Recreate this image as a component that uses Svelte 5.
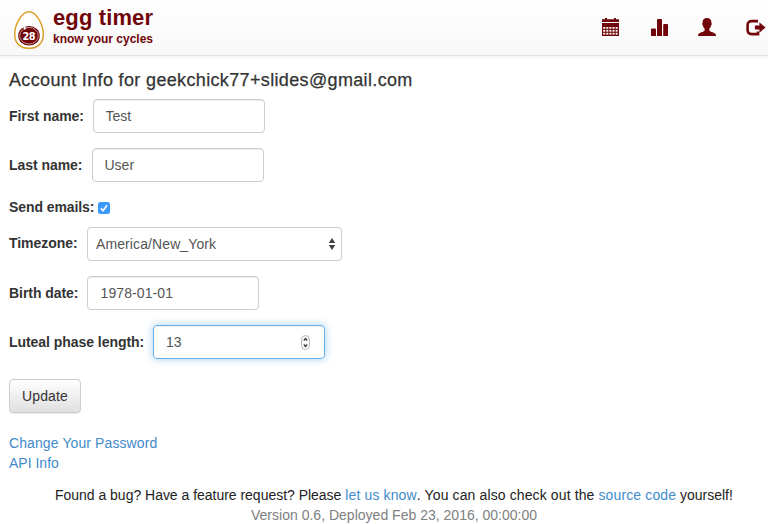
<script>
  let firstName = $state('Test');
  let lastName = $state('User');
  let birthDate = $state('1978-01-01');
  let luteal = $state('13');
  const cells = [0, 1, 2, 3, 4].flatMap((c) => [0, 1, 2].map((r) => [c, r]));
</script>

<header>
  <a class="brand" href="#home">
    <svg class="egg" width="32" height="40" viewBox="0 0 32 40">
      <path d="M16 1.7C8.7 1.7 1.7 14.5 1.7 24.5C1.7 33.7 7.8 38.3 16 38.3S30.3 33.7 30.3 24.5C30.3 14.5 23.3 1.7 16 1.7Z" fill="#fff" stroke="#dca12d" stroke-width="1.5" />
      <ellipse cx="16" cy="25.7" rx="10.8" ry="9.8" fill="#700609" />
      <ellipse cx="16" cy="25.7" rx="9.3" ry="8.3" fill="none" stroke="#d9b5b5" stroke-width=".8" />
      <path d="M10.3 16.5l3.2 1.2-2 2.5z" fill="#fff" />
      <text x="15.7" y="29.9" text-anchor="middle">28</text>
    </svg>
    <span class="words"><span class="name">egg timer</span><span class="tag">know your cycles</span></span>
  </a>
  <nav>
    <a href="#calendar" aria-label="Calendar">
      <svg width="17" height="18" viewBox="0 0 17 18">
        <path d="M0 1.2h3V0h2v1.2h7V0h2v1.2h3V4H0zM0 5h17v13H0z" />
        {#each cells as [c, r]}
          <rect x={1.2 + c * 3.1} y={9 + r * 2.9} width="2" height="1.8" fill="#fff" />
        {/each}
      </svg>
    </a>
    <a href="#charts" aria-label="Charts">
      <svg width="17" height="18" viewBox="0 0 17 18">
        <path d="M0 18v-6.5q0-1 1-1h3q1 0 1 1V18zM6 18V2q0-1 1-1h3q1 0 1 1v16zM12.2 18V7q0-1 1-1H16q1 0 1 1v11z" />
      </svg>
    </a>
    <a href="#account" aria-label="Account">
      <svg width="18" height="18" viewBox="0 0 18 18">
        <path d="M9 0C6 0 4.6 1.7 4.6 4.4c0 .7-.5.8-.4 1.7.1.8.6 1.1.8 1.8.3 1.2.8 2 1.6 2.7v2.1C5.9 13.7.9 14.6.2 16.4L0 18h18l-.2-1.6c-.7-1.8-5.7-2.7-6.4-3.7v-2.1c.8-.7 1.3-1.5 1.6-2.7.2-.7.7-1 .8-1.8.1-.9-.4-1-.4-1.7C13.4 1.7 12 0 9 0z" />
      </svg>
    </a>
    <a href="#logout" aria-label="Log out">
      <svg width="20" height="18" viewBox="0 0 20 18">
        <path d="M12 3.1H5.8q-4.2 0-4.2 4v5q0 4 4.2 4H12v-2.5" fill="none" stroke="#700609" stroke-width="2.6" />
        <path d="M13.4 4.2l6.2 5.3-6.2 5.3v-3.2H8.9V7.4h4.5z" />
      </svg>
    </a>
  </nav>
</header>

<main>
  <h4><span>Account Info for geekchick77+slides@gmail.com</span></h4>
  <form onsubmit={(e) => e.preventDefault()}>
    <div class="row first"><label for="first">First name:</label><input id="first" bind:value={firstName} /></div>
    <div class="row last"><label for="last">Last name:</label><input id="last" bind:value={lastName} /></div>
    <div class="check">
      <span class="label">Send emails:</span>
      <span class="box" role="checkbox" aria-checked="true" aria-label="Send emails" tabindex="0">
        <svg width="12" height="12" viewBox="0 0 12 12"><path d="M3 6.4l2.1 2.3L9 3.2" fill="none" stroke="#fff" stroke-width="1.6" /></svg>
      </span>
    </div>
    <div class="row zone">
      <span class="label">Timezone:</span>
      <div class="select"><span>America/New_York</span><svg width="8" height="12" viewBox="0 0 8 12"><path d="M4 0l3.3 5H.7zM4 12L.7 7h6.6z" fill="#444" /></svg></div>
    </div>
    <div class="row birth"><label for="birth">Birth date:</label><input id="birth" bind:value={birthDate} /></div>
    <div class="row luteal">
      <label for="luteal">Luteal phase length:</label>
      <div class="number">
        <input id="luteal" bind:value={luteal} />
        <svg width="9" height="15" viewBox="0 0 9 15"><rect x=".5" y=".5" width="8" height="14" rx="4" fill="#fafafa" stroke="#b8b8b8" /><path d="M2.8 5.5l1.7-2 1.7 2M2.8 9.5l1.7 2 1.7-2" fill="none" stroke="#333" stroke-width="1.2" /></svg>
      </div>
    </div>
    <button>Update</button>
  </form>
  <div class="links"><a class="password" href="#password">Change Your Password</a><a href="#api">API Info</a></div>
</main>
<footer>
  <div class="help">Found a bug? Have a feature request? Please <a href="#contact">let us know</a><span>. You can also check out the</span> <a href="#source">source code</a> yourself!</div>
  <div class="version">Version 0.6, Deployed Feb 23, 2016, 00:00:00</div>
</footer>

<style>
  :global(body) { margin: 0; background: #fff; color: #333; font: 14px/20px "Liberation Sans", Arial, sans-serif; overflow: hidden; }
  * { box-sizing: border-box; }
  svg { display: block; }
  a { color: #428bca; text-decoration: none; }
  header { height: 56px; display: flex; justify-content: space-between; background: linear-gradient(#fff, #f8f8f8); border-bottom: 1px solid #e3e3e3; box-shadow: 0 1px 4px rgba(0, 0, 0, .07); }
  .brand { display: flex; color: #700609; padding: 10px 0 0 13px; font-weight: bold; }
  .egg text { font: bold 9.8px "DejaVu Sans", sans-serif; fill: #fff; letter-spacing: -.6px; }
  .words { display: flex; flex-direction: column; margin-left: 8px; margin-top: -5px; white-space: nowrap; }
  .name { font-size: 22px; line-height: 26px; letter-spacing: .12px; }
  .tag { font-size: 12px; line-height: 16px; }
  nav { display: flex; gap: 30px; padding: 18px 2px 0 0; }
  nav a:nth-child(1) { margin-right: 2px; }
  nav svg { fill: #700609; }
  main { padding: 14px 9px 0; }
  h4 { margin: 0; font-size: 18px; line-height: 20px; font-weight: normal; height: 29px; letter-spacing: .35px; -webkit-text-stroke: .25px #333; white-space: nowrap; }
  .row { display: flex; height: 34px; margin-bottom: 15px; line-height: 34px; }
  label, .label { font-weight: bold; white-space: nowrap; flex: none; letter-spacing: -.05px; }
  .first label { width: 84px; }
  .last label { width: 83px; }
  .first input, .last input { padding-left: 11.5px; }
  .birth input { padding-left: 12.5px; letter-spacing: .1px; }
  .zone .label, .birth label { width: 78px; }
  .zone .label { line-height: 32px; }
  .luteal label { width: 144px; }
  input, .select { height: 34px; border: 1px solid #ccc; border-radius: 4px; background: #fff; color: #555; font: inherit; line-height: 20px; box-shadow: inset 0 1px 1px rgba(0, 0, 0, .075); outline: 0; }
  input { width: 172px; padding: 6px 12px; }
  .check { display: flex; height: 20px; margin: 0 0 10px; }
  .check .label { width: 85px; letter-spacing: -.08px; }
  .box { width: 12px; height: 12px; margin: 5px 0 0 4px; border-radius: 2.5px; background: #3b99fc; }
  .select { width: 255px; display: flex; align-items: center; justify-content: space-between; padding: 0 5px 0 8px; box-shadow: none; letter-spacing: .1px; }
  .number { display: flex; align-items: center; width: 172px; border: 1px solid #66afe9; border-radius: 4px; padding-right: 14px; box-shadow: inset 0 1px 1px rgba(0, 0, 0, .075), 0 0 8px rgba(102, 175, 233, .6); }
  .number input { border: 0; flex: 1; min-width: 0; height: 32px; background: transparent; box-shadow: none; }
  button { display: block; width: 72px; height: 34px; margin-top: 20px; padding: 0; font: inherit; letter-spacing: .15px; color: #333; border: 1px solid #ccc; border-radius: 4px; background: linear-gradient(#fff, #e0e0e0); box-shadow: 0 1px 1px rgba(0, 0, 0, .075); }
  .links { display: flex; flex-direction: column; align-items: flex-start; padding-top: 20px; }
  .password { letter-spacing: .1px; }
  footer { padding: 12px 0 0 55px; color: #222; white-space: nowrap; }
  .help { letter-spacing: -.02px; }
  .help a { letter-spacing: .14px; }
  .help span { letter-spacing: .12px; }
  .version { color: #808080; padding-left: 196px; letter-spacing: .01px; }
</style>
